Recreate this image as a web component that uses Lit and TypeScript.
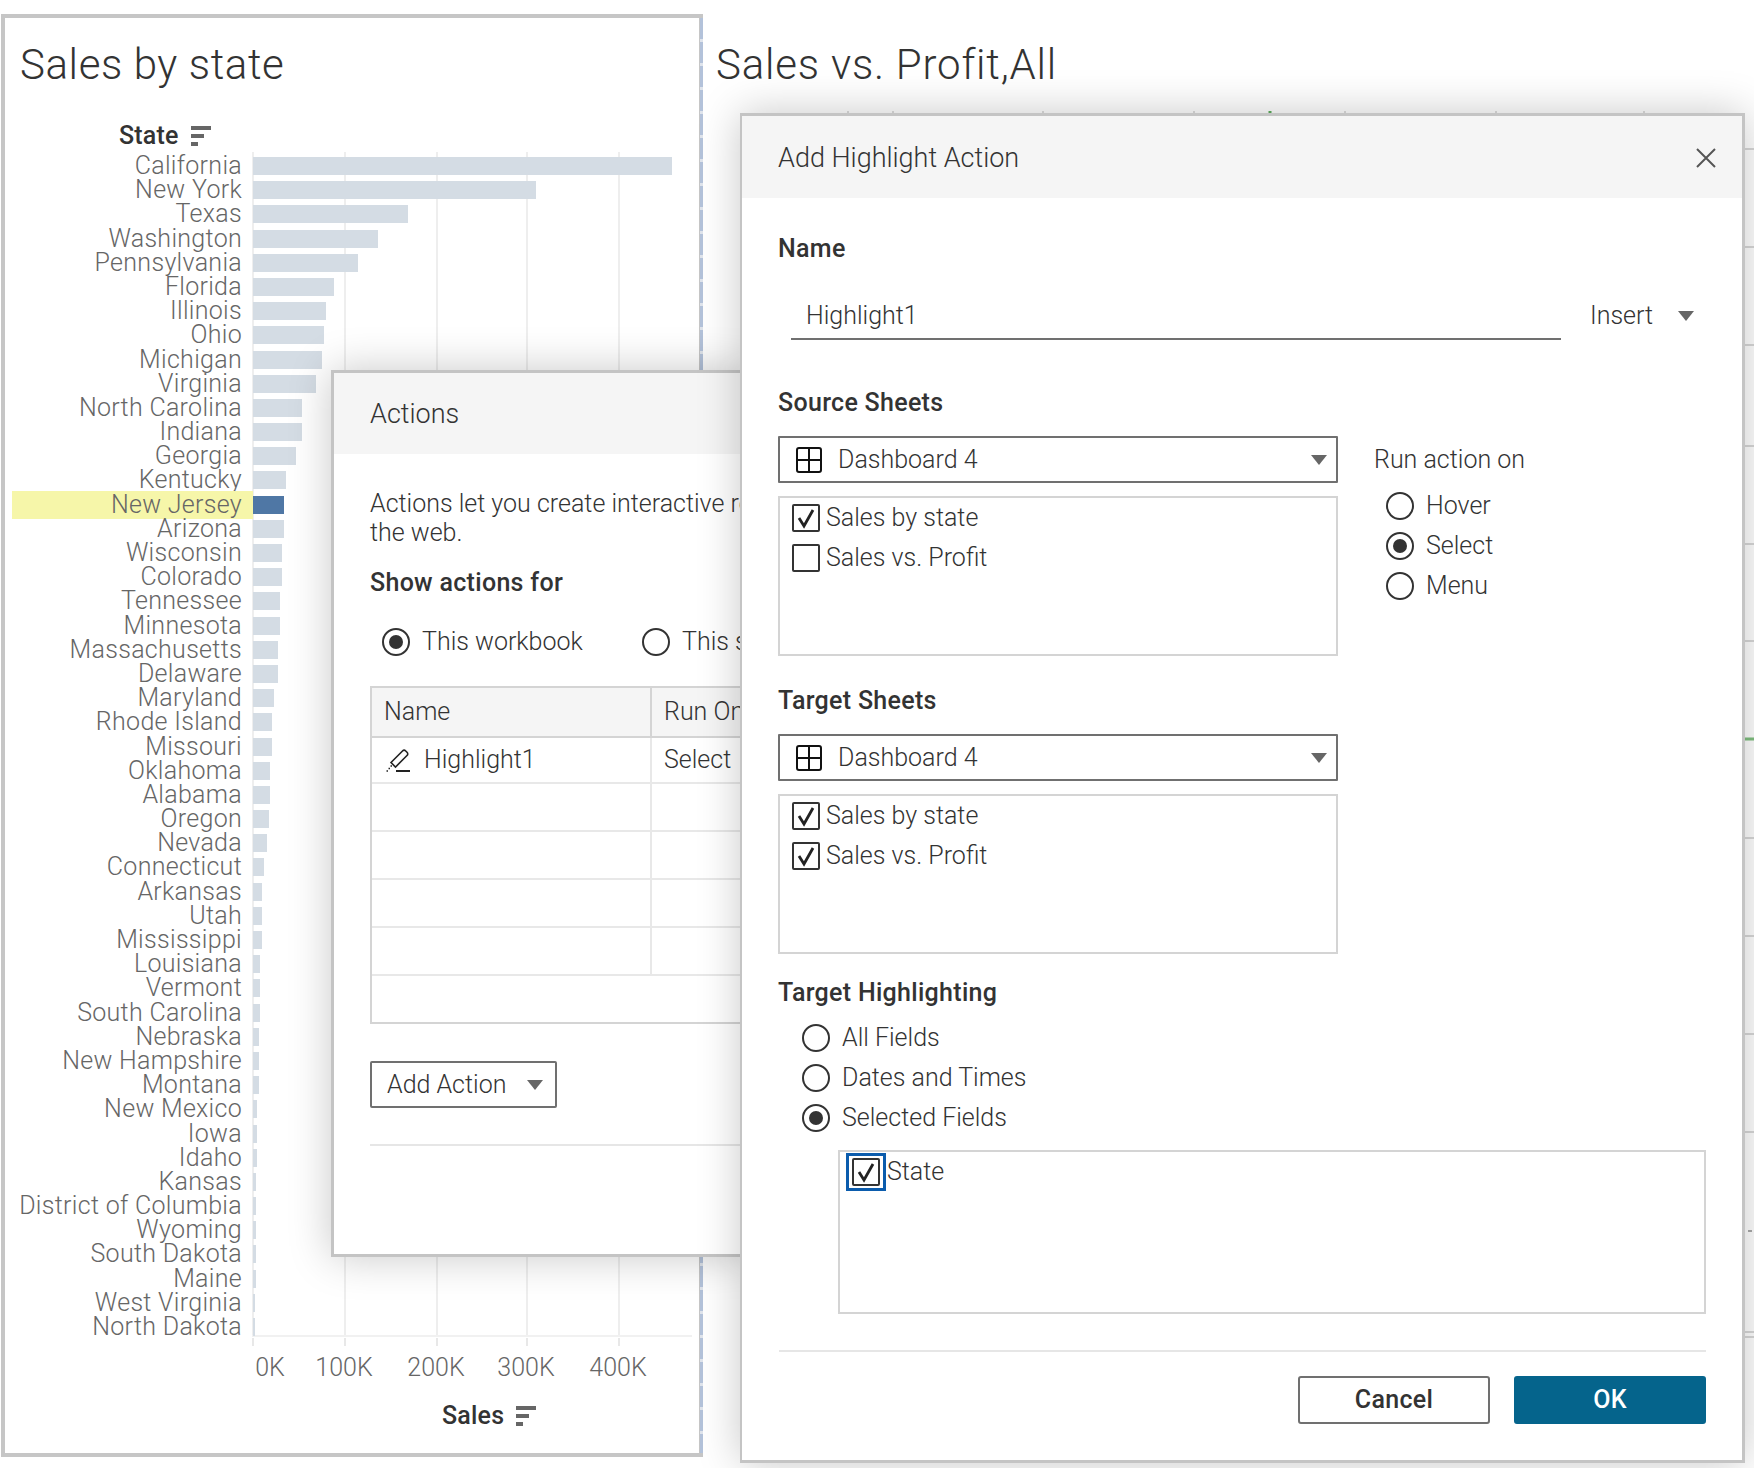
import { LitElement, html, css, svg } from "lit";
import { customElement } from "lit/decorators.js";

// [state, bar width in px]
const STATES: [string, number][] = [
  ["California", 419], ["New York", 283], ["Texas", 155], ["Washington", 125], ["Pennsylvania", 105],
  ["Florida", 81], ["Illinois", 73], ["Ohio", 71], ["Michigan", 69], ["Virginia", 63],
  ["North Carolina", 49], ["Indiana", 49], ["Georgia", 43], ["Kentucky", 33], ["New Jersey", 31],
  ["Arizona", 31], ["Wisconsin", 29], ["Colorado", 29], ["Tennessee", 27], ["Minnesota", 27],
  ["Massachusetts", 25], ["Delaware", 25], ["Maryland", 21], ["Rhode Island", 19], ["Missouri", 19],
  ["Oklahoma", 17], ["Alabama", 17], ["Oregon", 16], ["Nevada", 14], ["Connecticut", 11],
  ["Arkansas", 9], ["Utah", 9], ["Mississippi", 9], ["Louisiana", 7], ["Vermont", 7],
  ["South Carolina", 7], ["Nebraska", 6], ["New Hampshire", 6], ["Montana", 6], ["New Mexico", 4],
  ["Iowa", 4], ["Idaho", 4], ["Kansas", 3], ["District of Columbia", 3], ["Wyoming", 3],
  ["South Dakota", 3], ["Maine", 3], ["West Virginia", 2], ["North Dakota", 2],
];

const AXIS: [string, number][] = [["0K", 36], ["", 10], ["100K", 92], ["200K", 92], ["300K", 88], ["400K", 96]];

const BACK_ROWS = [149, 247, 345, 446, 544, 641, 838, 936, 1034, 1132, 1332, 1337];
const BACK_COLS = [848, 893, 1043, 1194, 1345, 1496, 1644];

const sortIcon = html`<svg class="sort" width="20" height="20" viewBox="0 0 20 20">
  <rect x="0" y="0" width="20" height="4" fill="#666"></rect>
  <rect x="0" y="8" width="13" height="4" fill="#666"></rect>
  <rect x="0" y="16" width="7" height="4" fill="#666"></rect>
</svg>`;

const gridIcon = html`<svg width="26" height="26" viewBox="0 0 26 26" fill="none" stroke="#111" stroke-width="2">
  <rect x="1" y="1" width="24" height="24" rx="2"></rect>
  <path d="M13 1V25M1 13H25"></path>
</svg>`;

const caret = html`<svg width="16" height="10" viewBox="0 0 16 10"><path d="M0 0H16L8 10Z" fill="#666"></path></svg>`;

const pencil = html`<svg class="pencil" width="24" height="24" viewBox="0 0 24 24" fill="none" stroke="#222">
  <path stroke-width="1.6" d="M5 14.5 16.5 3c1-1 2.2-1 3.200 0l1.300 1.300c1 1 1 2.200 0 3.200L9.500 19 5 14.500Z"></path>
  <path stroke-width="2" d="M10 23H24"></path>
  <path stroke-width="1.600" d="M0.500 23h1.500M2.500 20.500h1.500M4.500 18h1.500"></path>
</svg>`;

const closeIcon = html`<svg width="20" height="20" viewBox="0 0 20 20" stroke="#555" stroke-width="2"><path d="M1 1 19 19M19 1 1 19"></path></svg>`;

const radio = (on: boolean, label: string) => html`<div class="radio-row">
  <span class="radio ${on ? "on" : ""}"></span><span>${label}</span>
</div>`;

const checkMark = html`<svg width="24" height="24" viewBox="0 0 24 24" fill="none" stroke="#222" stroke-width="2.800"><path d="M5 12 10 20 19 4"></path></svg>`;

const check = (on: boolean) => html`<span class="check">${on ? checkMark : ""}</span>`;

const checkRow = (on: boolean, label: string) => html`<div class="check-row">${check(on)}<span>${label}</span></div>`;

const sheetSelect = html`<div class="select">${gridIcon}<span class="select-text">Dashboard 4</span>${caret}</div>`;

@customElement("app-root")
export class AppRoot extends LitElement {
  static styles = css`
    :host {
      display: block;
      position: relative;
      width: 1754px;
      height: 1468px;
      overflow: hidden;
      background: #fff;
      font-family: Roboto, "Liberation Sans", sans-serif;
      font-size: 25px;
      font-weight: 300;
      line-height: 28px;
      color: #333;
    }
    .page {
      display: flex;
      align-items: flex-start;
      padding: 14px 0 0 1px;
    }
    .panel {
      position: relative;
      box-sizing: border-box;
      width: 702px;
      height: 1443px;
      border: 4px solid #c6c6c6;
      padding-top: 22px;
    }
    .panel::after {
      content: "";
      position: absolute;
      top: 0;
      bottom: 0;
      right: -4px;
      width: 3px;
      background: repeating-linear-gradient(#b3c2da 0 21px, #dfe4ec 21px 24px);
    }
    .title {
      font-size: 42px;
      letter-spacing: 0.6px;
      line-height: 50px;
      color: #333;
      white-space: nowrap;
    }
    .panel .title {
      margin-left: 15px;
    }
    .page > .title {
      margin: 26px 0 0 13px;
      letter-spacing: 0.8px;
    }
    .field-head {
      display: flex;
      align-items: center;
      gap: 12px;
      height: 28px;
      font-weight: 500;
      letter-spacing: 0.2px;
      color: #333;
    }
    .state-head {
      margin: 32px 0 0 114px;
    }
    .sales-head {
      margin: 20px 0 0 437px;
    }
    .chart {
      margin-top: 2px;
      background-image:
        linear-gradient(#eee, #eee), linear-gradient(#eee, #eee), linear-gradient(#eee, #eee),
        linear-gradient(#eee, #eee), linear-gradient(#eee, #eee);
      background-repeat: no-repeat;
      background-size: 2px 100%;
      background-position: 247px 0, 339px 0, 431px 0, 521px 0, 613px 0;
    }
    .row {
      display: grid;
      grid-template-columns: 241px 1fr;
      height: 24.19px;
      margin-left: 7px;
      align-items: center;
    }
    .label {
      height: 100%;
      box-sizing: border-box;
      padding-right: 11px;
      text-align: right;
      font-size: 25px;
      letter-spacing: 0.3px;
      line-height: 28px;
      color: #666;
      white-space: nowrap;
    }
    .label.hit {
      background: #f6f6a9;
    }
    .bar {
      height: 18px;
      background: #d4dce4;
    }
    .bar.hit {
      background: #4f77a5;
    }
    .axis {
      margin: -2px 0 0 247px;
      width: 440px;
      height: 2px;
      background: #f1f1f1;
    }
    .ticks {
      margin-left: 247px;
      width: 440px;
      height: 8px;
      margin-top: 1px;
      background-image:
        linear-gradient(#e8e8e8, #e8e8e8), linear-gradient(#e8e8e8, #e8e8e8), linear-gradient(#e8e8e8, #e8e8e8),
        linear-gradient(#e8e8e8, #e8e8e8), linear-gradient(#e8e8e8, #e8e8e8);
      background-repeat: no-repeat;
      background-size: 2px 100%;
      background-position: 0 0, 92px 0, 184px 0, 274px 0, 366px 0;
    }
    .axis-labels {
      display: flex;
      margin: 8px 0 0 247px;
      color: #666;
    }
    .axis-labels span {
      text-align: center;
      white-space: nowrap;
    }
    .backdrop {
      position: absolute;
      left: 740px;
      top: 111px;
    }
    .dialog {
      position: absolute;
      box-sizing: border-box;
      background: #fff;
      border: 3px solid #c4c4c4;
      box-shadow: 0 0 40px rgba(0, 0, 0, 0.22);
      overflow: hidden;
    }
    .actions {
      left: 331px;
      top: 370px;
      width: 421px;
      height: 887px;
    }
    .main {
      left: 740px;
      top: 113px;
      width: 1005px;
      height: 1350px;
      border-left-width: 2px;
    }
    .head {
      display: flex;
      align-items: center;
      justify-content: space-between;
      background: #f5f5f5;
      box-sizing: border-box;
      padding: 0 18px 0 36px;
      font-size: 27px;
    }
    .actions .head {
      height: 81px;
    }
    .main .head {
      height: 82px;
      padding: 2px 26px 0 36px;
    }
    .actions .body {
      padding: 35px 0 0 36px;
      width: 700px;
    }
    .main .body {
      padding: 36px 36px 0 36px;
    }
    .bold {
      font-weight: 500;
      letter-spacing: 0.3px;
      color: #333;
      white-space: nowrap;
    }
    .main .bold {
      padding-top: 1px;
      margin-bottom: -1px;
    }
    .intro {
      line-height: 29px;
      white-space: nowrap;
    }
    .show-for {
      margin-top: 22px;
    }
    .scope {
      display: flex;
      margin: 25px 0 0 12px;
    }
    .scope .radio-row {
      width: 260px;
      gap: 12px;
    }
    .radio-row {
      display: flex;
      align-items: center;
      gap: 13px;
      height: 40px;
      white-space: nowrap;
    }
    .radio {
      position: relative;
      box-sizing: border-box;
      width: 28px;
      height: 28px;
      flex: none;
      border: 2px solid #333;
      border-radius: 50%;
      background: #fff;
    }
    .radio.on::after {
      content: "";
      position: absolute;
      inset: 5px;
      border-radius: 50%;
      background: #333;
    }
    .table {
      margin-top: 24px;
      width: 660px;
      border: 2px solid #d4d4d4;
      border-width: 2px 0 2px 2px;
    }
    .tr {
      display: grid;
      grid-template-columns: 278px 1fr;
      box-sizing: border-box;
      height: 48px;
      border-bottom: 2px solid #e8e8e8;
    }
    .tr.th {
      height: 50px;
      background: #f5f5f5;
      border-bottom-color: #d4d4d4;
    }
    .tr.r1 {
      height: 46px;
    }
    .tr.last {
      height: 46px;
      border-bottom: 0;
      display: block;
    }
    .td {
      display: flex;
      align-items: center;
      padding-left: 12px;
      white-space: nowrap;
    }
    .td + .td {
      border-left: 2px solid #e8e8e8;
    }
    .th .td + .td {
      border-left-color: #d4d4d4;
    }
    .pencil {
      margin: 0 14px 0 2px;
    }
    .menu-btn {
      display: flex;
      align-items: center;
      justify-content: space-between;
      box-sizing: border-box;
      width: 187px;
      height: 47px;
      margin-top: 37px;
      padding: 0 12px 0 15px;
      border: 2px solid #707070;
      border-radius: 2px;
    }
    .divider {
      height: 2px;
      background: #e6e6e6;
    }
    .actions .divider {
      margin-top: 36px;
    }
    .name-row {
      display: flex;
      align-items: center;
      margin-left: 13px;
      margin-top: 29px;
    }
    .input {
      box-sizing: border-box;
      width: 770px;
      height: 49px;
      padding: 11px 0 0 15px;
      border-bottom: 2px solid #707070;
    }
    .insert {
      display: flex;
      align-items: center;
      gap: 25px;
      margin-left: 29px;
      height: 49px;
    }
    .sec {
      margin-top: 48px;
    }
    .sheets {
      display: grid;
      grid-template-columns: 560px 1fr;
      column-gap: 36px;
    }
    .run {
      margin-top: 20px;
      padding-top: 10px;
    }
    .run .opts {
      margin: 12px 0 0 12px;
    }
    .run .radio-row {
      gap: 12px;
    }
    .select {
      display: flex;
      align-items: center;
      box-sizing: border-box;
      height: 47px;
      margin-top: 20px;
      padding: 0 9px 0 16px;
      border: 2px solid #707070;
      border-radius: 1px;
    }
    .select-text {
      flex: 1;
      margin-left: 16px;
    }
    .list {
      box-sizing: border-box;
      height: 160px;
      margin-top: 13px;
      padding: 0 0 0 12px;
      border: 2px solid #d4d4d4;
    }
    .check-row {
      display: flex;
      align-items: center;
      gap: 6px;
      height: 40px;
      white-space: nowrap;
    }
    .check {
      display: inline-flex;
      align-items: center;
      justify-content: center;
      box-sizing: border-box;
      width: 28px;
      height: 28px;
      flex: none;
      border: 2px solid #333;
      border-radius: 2px;
      background: #fff;
    }
    .target-sheets {
      margin-top: 30px;
    }
    .target-hl {
      margin-top: 24px;
    }
    .hl-opts {
      margin: 12px 0 0 24px;
    }
    .hl-opts .radio-row {
      gap: 12px;
    }
    .fields {
      box-sizing: border-box;
      height: 164px;
      width: 868px;
      margin: 12px 0 0 60px;
      padding: 0 0 0 6px;
      border: 2px solid #d4d4d4;
    }
    .field {
      display: flex;
      align-items: center;
      height: 40px;
    }
    .focus {
      display: flex;
      align-items: center;
      justify-content: center;
      box-sizing: border-box;
      width: 40px;
      height: 38px;
      margin-right: 1px;
      border: 3px solid #0b5cad;
    }
    .main .divider {
      margin-top: 36px;
      margin-left: 1px;
    }
    .buttons {
      display: flex;
      justify-content: flex-end;
      gap: 24px;
      margin-top: 24px;
    }
    .btn {
      display: flex;
      align-items: center;
      justify-content: center;
      box-sizing: border-box;
      width: 192px;
      height: 48px;
      border: 2px solid #707070;
      border-radius: 3px;
      font-weight: 500;
      letter-spacing: 0.3px;
      color: #333;
    }
    .btn.ok {
      background: #05648c;
      border-color: #05648c;
      color: #fff;
    }
  `;

  private renderBackdrop() {
    return html`<svg class="backdrop" width="1014" height="1240" viewBox="740 111 1014 1240">
      ${BACK_COLS.map((x) => svg`<line x1=${x} x2=${x} y1="111" y2="1340" stroke="#bbb" stroke-width="1"></line>`)}
      ${BACK_ROWS.map((y) => svg`<line x1="740" x2="1754" y1=${y} y2=${y} stroke="#d8d8d8" stroke-width="2"></line>`)}
      <line x1="1270" x2="1270" y1="111" y2="116" stroke="#5cae5c" stroke-width="3"></line>
      <line x1="740" x2="1754" y1="739" y2="739" stroke="#7fbf7f" stroke-width="3"></line>
      <line x1="740" x2="1754" y1="1231" y2="1231" stroke="#aaa" stroke-width="2" stroke-dasharray="4 3"></line>
    </svg>`;
  }

  private renderPanel() {
    return html`<div class="panel">
      <div class="title">Sales by state</div>
      <div class="field-head state-head"><span>State</span>${sortIcon}</div>
      <div class="chart">
        ${STATES.map(
          ([name, w]) => html`<div class="row">
            <div class="label ${name === "New Jersey" ? "hit" : ""}">${name}</div>
            <div class="bar ${name === "New Jersey" ? "hit" : ""}" style="width:${w}px"></div>
          </div>`
        )}
      </div>
      <div class="axis"></div>
      <div class="ticks"></div>
      <div class="axis-labels">
        ${AXIS.map(([t, w]) => html`<span style="width:${w}px">${t}</span>`)}
      </div>
      <div class="field-head sales-head"><span>Sales</span>${sortIcon}</div>
    </div>`;
  }

  private renderActions() {
    return html`<div class="dialog actions">
      <div class="head">Actions</div>
      <div class="body">
        <div class="intro">Actions let you create interactive reports<br />the web.</div>
        <div class="bold show-for">Show actions for</div>
        <div class="scope">${radio(true, "This workbook")}${radio(false, "This sheet")}</div>
        <div class="table">
          <div class="tr th"><div class="td">Name</div><div class="td">Run On</div></div>
          <div class="tr r1"><div class="td">${pencil}Highlight1</div><div class="td">Select</div></div>
          ${[0, 1, 2, 3].map(() => html`<div class="tr"><div class="td"></div><div class="td"></div></div>`)}
          <div class="tr last"></div>
        </div>
        <div class="menu-btn"><span>Add Action</span>${caret}</div>
        <div class="divider"></div>
      </div>
    </div>`;
  }

  private renderMain() {
    return html`<div class="dialog main">
      <div class="head"><span>Add Highlight Action</span>${closeIcon}</div>
      <div class="body">
        <div class="bold">Name</div>
        <div class="name-row">
          <div class="input">Highlight1</div>
          <div class="insert"><span>Insert</span>${caret}</div>
        </div>
        <div class="bold sec">Source Sheets</div>
        <div class="sheets">
          <div>
            ${sheetSelect}
            <div class="list">${checkRow(true, "Sales by state")}${checkRow(false, "Sales vs. Profit")}</div>
          </div>
          <div class="run">
            <div>Run action on</div>
            <div class="opts">${radio(false, "Hover")}${radio(true, "Select")}${radio(false, "Menu")}</div>
          </div>
        </div>
        <div class="bold target-sheets">Target Sheets</div>
        <div class="sheets">
          <div>
            ${sheetSelect}
            <div class="list">${checkRow(true, "Sales by state")}${checkRow(true, "Sales vs. Profit")}</div>
          </div>
        </div>
        <div class="bold target-hl">Target Highlighting</div>
        <div class="hl-opts">${radio(false, "All Fields")}${radio(false, "Dates and Times")}${radio(true, "Selected Fields")}</div>
        <div class="fields">
          <div class="field"><span class="focus">${check(true)}</span><span>State</span></div>
        </div>
        <div class="divider"></div>
        <div class="buttons"><div class="btn">Cancel</div><div class="btn ok">OK</div></div>
      </div>
    </div>`;
  }

  render() {
    return html`
      <div class="page">
        ${this.renderPanel()}
        <div class="title">Sales vs. Profit,All</div>
      </div>
      ${this.renderBackdrop()} ${this.renderActions()} ${this.renderMain()}
    `;
  }
}
